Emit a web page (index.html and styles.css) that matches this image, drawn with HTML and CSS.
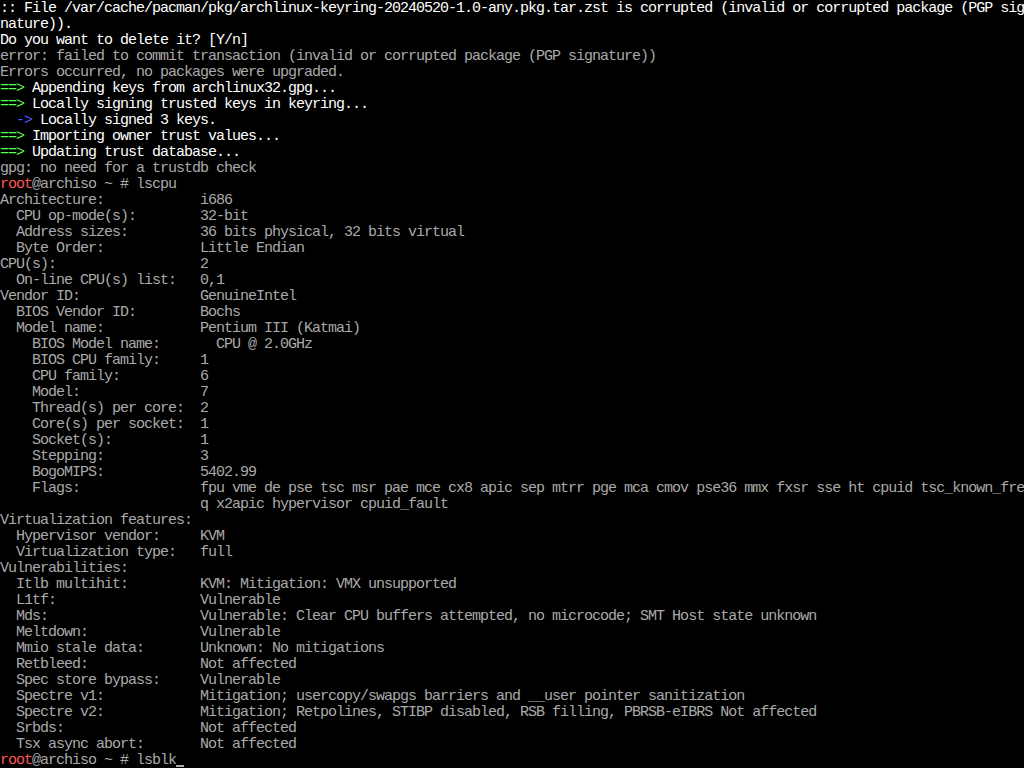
FILE: index.html
```html
<!DOCTYPE html>
<html lang="en">
<head>
<meta charset="utf-8">
<title>tty1</title>
<link rel="stylesheet" href="styles.css">
</head>
<body>
<pre class="console"><span class="bold">:: File /var/cache/pacman/pkg/archlinux-keyring-20240520-1.0-any.pkg.tar.zst is corrupted (invalid or corrupted package (PGP sig
nature)).
Do you want to delete it? [Y/n]</span>
error: failed to commit transaction (invalid or corrupted package (PGP signature))
Errors occurred, no packages were upgraded.
<span class="green">==&gt;</span> <span class="bold">Appending keys from archlinux32.gpg...</span>
<span class="green">==&gt;</span> <span class="bold">Locally signing trusted keys in keyring...</span>
  <span class="blue">-&gt;</span> <span class="bold">Locally signed 3 keys.</span>
<span class="green">==&gt;</span> <span class="bold">Importing owner trust values...</span>
<span class="green">==&gt;</span> <span class="bold">Updating trust database...</span>
gpg: no need for a trustdb check
<span class="red">root</span>@archiso ~ # lscpu
Architecture:            i686
  CPU op-mode(s):        32-bit
  Address sizes:         36 bits physical, 32 bits virtual
  Byte Order:            Little Endian
CPU(s):                  2
  On-line CPU(s) list:   0,1
Vendor ID:               GenuineIntel
  BIOS Vendor ID:        Bochs
  Model name:            Pentium III (Katmai)
    BIOS Model name:       CPU @ 2.0GHz
    BIOS CPU family:     1
    CPU family:          6
    Model:               7
    Thread(s) per core:  2
    Core(s) per socket:  1
    Socket(s):           1
    Stepping:            3
    BogoMIPS:            5402.99
    Flags:               fpu vme de pse tsc msr pae mce cx8 apic sep mtrr pge mca cmov pse36 mmx fxsr sse ht cpuid tsc_known_fre
                         q x2apic hypervisor cpuid_fault
Virtualization features:
  Hypervisor vendor:     KVM
  Virtualization type:   full
Vulnerabilities:
  Itlb multihit:         KVM: Mitigation: VMX unsupported
  L1tf:                  Vulnerable
  Mds:                   Vulnerable: Clear CPU buffers attempted, no microcode; SMT Host state unknown
  Meltdown:              Vulnerable
  Mmio stale data:       Unknown: No mitigations
  Retbleed:              Not affected
  Spec store bypass:     Vulnerable
  Spectre v1:            Mitigation; usercopy/swapgs barriers and __user pointer sanitization
  Spectre v2:            Mitigation; Retpolines, STIBP disabled, RSB filling, PBRSB-eIBRS Not affected
  Srbds:                 Not affected
  Tsx async abort:       Not affected
<span class="red">root</span>@archiso ~ # lsblk<span class="cursor"></span></pre>
</body>
</html>
```
FILE: styles.css
```css
html, body {
  margin: 0;
  padding: 0;
  background: #000000;
  width: 1024px;
  height: 768px;
  overflow: hidden;
}

.console {
  margin: 0;
  padding: 1px 0 0 0;
  color: #aaaaaa;
  font-family: "Liberation Mono", "DejaVu Sans Mono", monospace;
  font-size: 15px;
  letter-spacing: -1px;
  line-height: 16px;
  white-space: pre;
}

.bold {
  color: #ffffff;
}

.green {
  color: #55ff55;
}

.blue {
  color: #5555ff;
}

.red {
  color: #ff5555;
}

.cursor {
  display: inline-block;
  width: 8px;
  height: 14px;
  box-sizing: border-box;
  border-bottom: 2px solid #aaaaaa;
  vertical-align: top;
}
```
